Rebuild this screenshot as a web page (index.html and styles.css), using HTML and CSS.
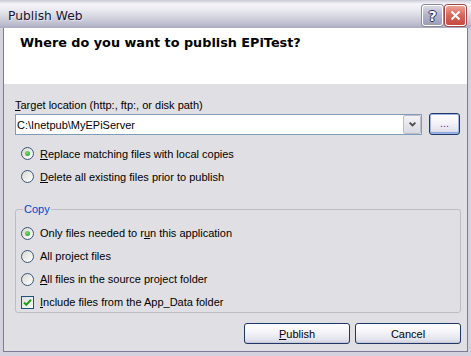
FILE: index.html
```html
<!DOCTYPE html>
<html>

<head>
    <title>Publish Web</title>

    <link rel="stylesheet" href="styles.css">
</head>

<body>
    <div class="window">
        <div class="titlebar">
            <span class="caption">Publish Web</span>
            <div class="capbtns">
                <span class="capbtn help">?</span>
                <span class="capbtn close">
                    <svg width="11" height="11" viewBox="0 0 11 11">
                        <path d="M1.5 1.5 L9.5 9.5 M9.5 1.5 L1.5 9.5" stroke="#fff" stroke-width="2" />
                    </svg>
                </span>
            </div>
        </div>
        <div class="client">
            <div class="header">Where do you want to publish EPiTest?</div>
            <div class="main">
                <div class="label"><u>T</u>arget location (http:, ftp:, or disk path)</div>
                <div class="pathrow">
                    <div class="combo">
                        <span class="combotext">C:\Inetpub\MyEPiServer</span>
                        <span class="dropbtn">
                            <svg width="7" height="5" viewBox="0 0 7 5">
                                <path d="M0.6 0.6 L3.5 3.5 L6.4 0.6" fill="none" stroke="#4a4a4a" stroke-width="1.8" />
                            </svg>
                        </span>
                    </div>
                    <span class="btn browse">...</span>
                </div>
                <div class="options">
                    <div class="opt"><span class="radio on"></span><span><u>R</u>eplace matching files with local copies</span></div>
                    <div class="opt"><span class="radio"></span><span><u>D</u>elete all existing files prior to publish</span></div>
                </div>
                <fieldset class="group">
                    <legend>Copy</legend>
                    <div class="opt"><span class="radio on"></span><span>Only files needed to r<u>u</u>n this application</span></div>
                    <div class="opt"><span class="radio"></span><span>All pro<u>j</u>ect files</span></div>
                    <div class="opt"><span class="radio"></span><span><u>A</u>ll files in the source project folder</span></div>
                    <div class="opt">
                        <span class="check">
                            <svg width="11" height="11" viewBox="0 0 11 11">
                                <path d="M2 5.5 L4.3 7.8 L9 2.8" fill="none" stroke="#21a121" stroke-width="2" />
                            </svg>
                        </span>
                        <span><u>I</u>nclude files from the App_Data folder</span>
                    </div>
                </fieldset>
                <div class="buttons">
                    <span class="btn"><u>P</u>ublish</span>
                    <span class="btn">Cancel</span>
                </div>
            </div>
        </div>
    </div>
</body>

</html>
```

FILE: styles.css
```css
body {
    margin: 0;
    background: #d3d2de;
    font-family: "Liberation Sans", Arial, sans-serif;
    font-size: 11px;
    color: #000;
}

.window {
    width: 471px;
    height: 356px;
    display: flex;
    flex-direction: column;
    background: #d3d2de;
}

.titlebar {
    height: 28px;
    flex: none;
    display: flex;
    justify-content: space-between;
    align-items: flex-start;
    background: linear-gradient(to bottom, #c9c9d6 0px, #f6f6f9 4px, #e9e9f0 10px, #d2d2de 18px, #babacd 25px, #aaaac0 28px);
}

.caption {
    margin: 9px 0 0 8px;
    font-family: "DejaVu Sans", sans-serif;
    font-size: 12.3px;
    line-height: 15px;
    color: #16163a;
    text-shadow: 1px 1px 0 rgba(255, 255, 255, 0.5);
}

.capbtns {
    display: flex;
    gap: 2px;
    margin: 5px 5px 0 0;
}

.capbtn {
    width: 21px;
    height: 21px;
    box-sizing: border-box;
    border: 1px solid #fff;
    border-radius: 3px;
    display: flex;
    align-items: center;
    justify-content: center;
    box-shadow: 0 0 0 1px #8a8aa4;
}

.help {
    background: linear-gradient(to bottom, #d9d9e6, #b3b3c9 50%, #9c9cb8);
    font-family: "DejaVu Sans", sans-serif;
    font-weight: bold;
    font-size: 14px;
    color: #fff;
    text-shadow: 1px 0 0 #2c2c50, -1px 0 0 #2c2c50, 0 1px 0 #2c2c50, 0 -1px 0 #2c2c50;
}

.close {
    background: linear-gradient(to bottom, #eea295, #d8665a 50%, #c44a40);
    box-shadow: 0 0 0 1px #a04848;
}

.client {
    flex: 1;
    margin: 0 3px 4px;
    border: 1px solid #7d7c97;
    border-top: none;
    display: flex;
    flex-direction: column;
    background: #e0dfe3;
}

.header {
    height: 56px;
    flex: none;
    box-sizing: border-box;
    padding: 7px 0 0 16px;
    background: #fff;
    font-family: "DejaVu Sans", sans-serif;
    font-weight: bold;
    font-size: 12.8px;
    line-height: 15px;
}

.main {
    flex: 1;
    padding: 14px 6px 0 11px;
}

.label {
    line-height: 14px;
}

.pathrow {
    display: flex;
    height: 21px;
    margin-top: 2px;
}

.combo {
    flex: 1;
    display: flex;
    align-items: center;
    box-sizing: border-box;
    border: 1px solid #7f9db9;
    padding-left: 1px;
    background: #fff;
}

.combotext {
    flex: 1;
}

.dropbtn {
    width: 18px;
    height: 19px;
    box-sizing: border-box;
    display: flex;
    align-items: center;
    justify-content: center;
    border: 1px solid #bcbccb;
    border-radius: 2px;
    background: linear-gradient(to bottom, #f3f3f7, #d9d9e2);
}

.btn {
    display: flex;
    align-items: center;
    justify-content: center;
    box-sizing: border-box;
    border: 1px solid #1f3767;
    border-radius: 3px;
    background: linear-gradient(to bottom, #ffffff, #f5f5f9 40%, #e4e4ee 80%, #d3d3e1);
    box-shadow: inset 0 -1px 0 #c9c9da;
}

.browse {
    width: 31px;
    height: 22px;
    margin: -1px 1px 0 7px;
    color: #7d1d8f;
    box-shadow: inset 0 0 0 1px #9db6e6, inset 0 -2px 0 #8aa6de;
    padding-bottom: 2px;
}

.options {
    margin-top: 7px;
    padding-left: 6px;
}

.opt {
    height: 23px;
    display: flex;
    align-items: center;
    gap: 6px;
}

.radio {
    width: 13px;
    height: 13px;
    flex: none;
    box-sizing: border-box;
    border: 1px solid #3d5478;
    border-radius: 50%;
    background: linear-gradient(135deg, #d8d8d2, #ffffff);
    display: flex;
    align-items: center;
    justify-content: center;
}

.radio.on::after {
    content: "";
    width: 5px;
    height: 5px;
    border-radius: 50%;
    background: radial-gradient(circle at 40% 35%, #6ee26e, #21a121);
}

.check {
    width: 13px;
    height: 13px;
    flex: none;
    box-sizing: border-box;
    border: 1px solid #1c5180;
    background: linear-gradient(135deg, #dcdcd7, #ffffff);
    display: flex;
    align-items: center;
    justify-content: center;
}

.group {
    margin: 14px 0 0;
    padding: 6px 0 0 5px;
    border: 1px solid #bdbdc6;
    border-radius: 3px;
    min-width: 0;
}

.group legend {
    margin-left: 2px;
    padding: 0 1px;
    line-height: 15px;
    color: #0046d5;
}

.group .opt {
    height: 20px;
}

.group .opt + .opt {
    margin-top: 3px;
}

.buttons {
    display: flex;
    justify-content: flex-end;
    gap: 5px;
    margin-top: 10px;
}

.buttons .btn {
    width: 106px;
    height: 21px;
}
```
